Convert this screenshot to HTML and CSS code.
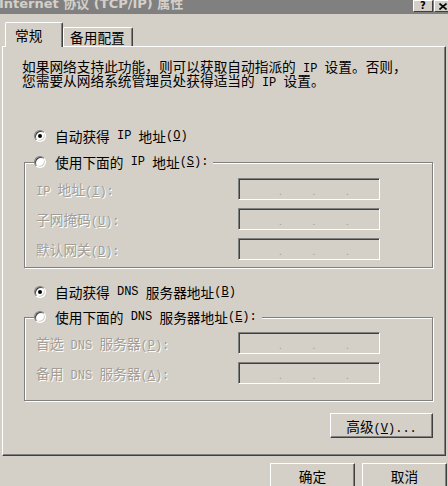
FILE: index.html
```html
<!DOCTYPE html>
<html lang="zh-CN">
<head>
	<meta charset="UTF-8">
	<title>Internet 协议 (TCP/IP) 属性</title>
	<link rel="stylesheet" href="styles.css">
</head>
<body>
	<div class="dialog">
		<div class="titlebar">
			<span class="title">Internet 协议 (TCP/IP) 属性</span>
			<span class="caption-btns">
				<span class="cbtn">?</span>
				<span class="cbtn close"><svg width="8" height="7" viewBox="0 0 8 7"><path d="M0.5 0.5 L7.5 6.5 M7.5 0.5 L0.5 6.5" stroke="#000" stroke-width="1.6"/></svg></span>
			</span>
		</div>

		<div class="tabs">
			<span class="tab active">常规</span>
			<span class="tab">备用配置</span>
		</div>

		<div class="panel">
			<p class="desc">如果网络支持此功能，则可以获取自动指派的<span class="en"> IP </span>设置。否则，<br>您需要从网络系统管理员处获得适当的<span class="en"> IP </span>设置。</p>

			<div class="option first"><span class="radio on"></span>自动获得<span class="en"> IP </span>地址<span class="en">(<u>O</u>)</span></div>
			<fieldset class="group">
				<legend class="option"><span class="radio"></span>使用下面的<span class="en"> IP </span>地址<span class="en">(<u>S</u>):</span></legend>
				<div class="fields">
					<label><span class="en">IP </span>地址<span class="en">(<u>I</u>):</span></label>
					<span class="ipbox"><span class="oct"></span><span class="dot">.</span><span class="oct"></span><span class="dot">.</span><span class="oct"></span><span class="dot">.</span><span class="oct"></span></span>
					<label>子网掩码<span class="en">(<u>U</u>):</span></label>
					<span class="ipbox"><span class="oct"></span><span class="dot">.</span><span class="oct"></span><span class="dot">.</span><span class="oct"></span><span class="dot">.</span><span class="oct"></span></span>
					<label>默认网关<span class="en">(<u>D</u>):</span></label>
					<span class="ipbox"><span class="oct"></span><span class="dot">.</span><span class="oct"></span><span class="dot">.</span><span class="oct"></span><span class="dot">.</span><span class="oct"></span></span>
				</div>
			</fieldset>

			<div class="option second"><span class="radio on"></span>自动获得<span class="en"> DNS </span>服务器地址<span class="en">(<u>B</u>)</span></div>
			<fieldset class="group dns">
				<legend class="option"><span class="radio"></span>使用下面的<span class="en"> DNS </span>服务器地址<span class="en">(<u>E</u>):</span></legend>
				<div class="fields">
					<label>首选<span class="en"> DNS </span>服务器<span class="en">(<u>P</u>):</span></label>
					<span class="ipbox"><span class="oct"></span><span class="dot">.</span><span class="oct"></span><span class="dot">.</span><span class="oct"></span><span class="dot">.</span><span class="oct"></span></span>
					<label>备用<span class="en"> DNS </span>服务器<span class="en">(<u>A</u>):</span></label>
					<span class="ipbox"><span class="oct"></span><span class="dot">.</span><span class="oct"></span><span class="dot">.</span><span class="oct"></span><span class="dot">.</span><span class="oct"></span></span>
				</div>
			</fieldset>

			<div class="panel-actions">
				<button class="btn advanced">高级<span class="en">(<u>V</u>)...</span></button>
			</div>
		</div>

		<div class="actions">
			<button class="btn">确定</button>
			<button class="btn">取消</button>
		</div>
	</div>
</body>
</html>
```

FILE: styles.css
```css
* {
	box-sizing: border-box;
}
body {
	margin: 0;
	background: #d4d0c8;
	color: #000;
	font-family: "Noto Sans CJK SC", sans-serif;
	font-size: 13.7px;
	overflow: hidden;
}
.dialog {
	width: 448px;
	height: 486px;
	overflow: hidden;
}
/* latin runs are half-width, like the old bitmap font */
.en {
	font-family: "Liberation Mono", monospace;
	font-size: 12px;
	line-height: 0;
	white-space: pre;
}

/* title bar, cropped at the top */
.titlebar {
	height: 14px;
	background: #808080;
	display: flex;
	justify-content: space-between;
	overflow: hidden;
}
.title {
	margin: -4px 0 0 -1px;
	font-family: "DejaVu Sans", "Noto Sans CJK SC", sans-serif;
	font-weight: bold;
	font-size: 13px;
	line-height: 15px;
	color: #d4d0c8;
	white-space: nowrap;
}
.caption-btns {
	display: flex;
	gap: 1px;
	margin-right: -3px;
}
.cbtn {
	width: 20px;
	height: 12px;
	display: flex;
	align-items: center;
	justify-content: center;
	background: #d4d0c8;
	border: 1px solid;
	border-color: #fff #404040 #404040 #fff;
	font-family: "DejaVu Sans", sans-serif;
	font-weight: bold;
	font-size: 10px;
	line-height: 10px;
}
.cbtn.close {
	width: 17px;
}

/* tabs */
.tabs {
	height: 32px;
	display: flex;
	align-items: flex-end;
	padding-left: 5px;
}
.tab {
	position: relative;
	height: 19px;
	padding: 0 7px 0 6px;
	border: 1px solid;
	border-color: #fff #404040 transparent #fff;
	border-bottom: none;
	border-radius: 2px 2px 0 0;
	box-shadow: inset -1px 0 0 #808080;
	line-height: 18px;
	white-space: nowrap;
}
.tab.active {
	z-index: 1;
	width: 58px;
	height: 25px;
	margin-bottom: -1px;
	padding-left: 9px;
	background: #d4d0c8;
	line-height: 24px;
}

/* tab page */
.panel {
	height: 410px;
	margin: 0 2px;
	padding: 12px 12px 0 20px;
	border: 1px solid;
	border-color: #fff #404040 #404040 #fff;
	box-shadow: inset -1px -1px 0 #808080;
}
.desc {
	margin: 0 0 0 -1px;
	line-height: 14px;
	white-space: nowrap;
}
.option {
	display: flex;
	align-items: center;
	height: 16px;
	line-height: 16px;
	padding-left: 11px;
	white-space: nowrap;
}
.option.first {
	margin-top: 41px;
}
.option.second {
	margin-top: 16px;
}
.radio {
	flex: none;
	width: 12px;
	height: 12px;
	margin-right: 9px;
	display: flex;
	align-items: center;
	justify-content: center;
	border-radius: 50%;
	background: #fff;
	border: 1px solid;
	border-color: #808080 #fff #fff #808080;
	box-shadow: inset 1px 1px 0 #404040, inset -1px -1px 0 #d4d0c8;
}
.radio.on::after {
	content: "";
	width: 4px;
	height: 4px;
	border-radius: 50%;
	background: #000;
}

/* group boxes */
.group {
	min-width: 0;
	margin: 10px 0 0 1px;
	padding: 8px 0 7px 9px;
	border: 1px solid #808080;
	box-shadow: 1px 1px 0 #fff, inset 1px 1px 0 #fff;
}
.group.dns {
	margin-top: 9px;
	padding-top: 7px;
	padding-bottom: 16px;
}
.group legend.option {
	padding: 0 5px 0 0;
	background: #d4d0c8;
}
.fields {
	display: grid;
	grid-template-columns: 202px 142px;
	grid-auto-rows: 22px;
	row-gap: 8px;
	align-items: center;
	padding-left: 2px;
}
.fields label {
	line-height: 22px;
	color: #a29e97;
	text-shadow: 1px 1px 0 #fff;
	white-space: nowrap;
}
.ipbox {
	height: 22px;
	display: flex;
	align-items: center;
	padding-left: 10px;
	background: #d4d0c8;
	border: 1px solid;
	border-color: #808080 #fff #fff #808080;
	box-shadow: inset 1px 1px 0 #404040, inset -1px -1px 0 #d4d0c8;
}
.ipbox .oct {
	flex: 1;
}
.ipbox .dot {
	width: 4px;
	font-size: 10px;
	line-height: 12px;
	margin-top: 4px;
	color: #a29e97;
	text-align: center;
}

/* buttons */
.btn {
	height: 25px;
	padding: 0;
	background: #d4d0c8;
	border: 1px solid;
	border-color: #fff #404040 #404040 #fff;
	box-shadow: inset -1px -1px 0 #808080;
	font-family: inherit;
	font-size: 13.7px;
	color: #000;
}
.panel-actions {
	display: flex;
	justify-content: flex-end;
	margin-top: 12px;
}
.btn.advanced {
	width: 103px;
}
.actions {
	display: flex;
	justify-content: flex-end;
	gap: 7px;
	margin-top: 7px;
	padding-right: 1px;
}
.actions .btn {
	width: 85px;
}
```
